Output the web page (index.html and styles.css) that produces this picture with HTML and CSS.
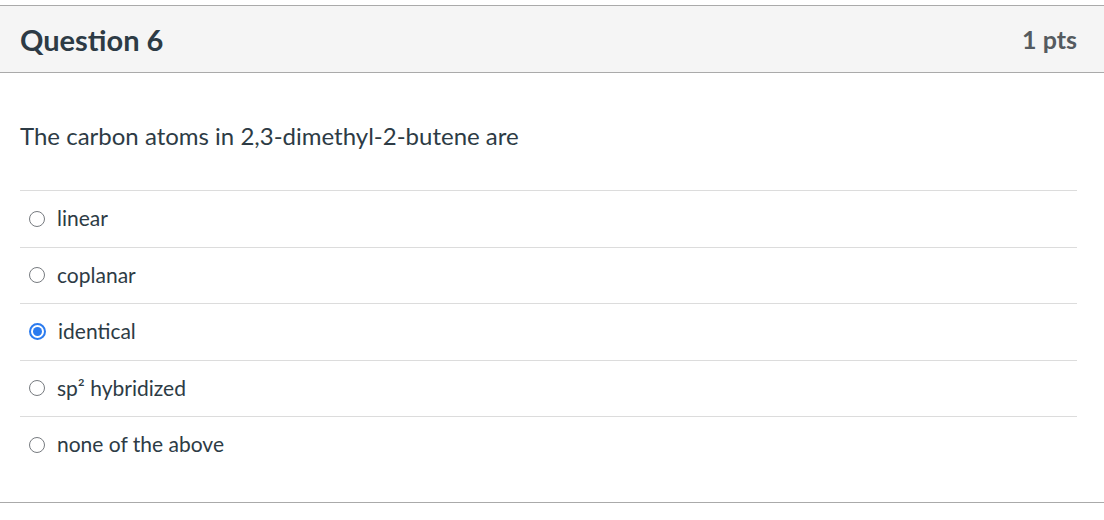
FILE: index.html
```html
<!DOCTYPE html>
<html>
<head>
<meta charset="utf-8">
<link rel="stylesheet" href="styles.css">
</head>
<body>
<div class="question">
  <div class="q-header">
    <h2 class="q-title">Question 6</h2>
    <div class="q-points">1 pts</div>
  </div>
  <div class="q-body">
    <p class="q-text">The carbon atoms in 2,3-dimethyl-2-butene are</p>
    <div class="answers">
      <label class="answer"><span class="radio"></span><span class="a-text">linear</span></label>
      <label class="answer"><span class="radio"></span><span class="a-text">coplanar</span></label>
      <label class="answer"><span class="radio checked"></span><span class="a-text">identical</span></label>
      <label class="answer"><span class="radio"></span><span class="a-text">sp² hybridized</span></label>
      <label class="answer"><span class="radio"></span><span class="a-text">none of the above</span></label>
    </div>
  </div>
</div>
</body>
</html>
```

FILE: styles.css
```css
html, body {
  margin: 0;
  padding: 0;
  background: #ffffff;
}
body {
  font-family: Lato, "Open Sans", sans-serif;
  color: #2d3b45;
}
.question {
  margin-top: 5px;
  border-top: 1px solid #aaaaaa;
  border-bottom: 1px solid #aaaaaa;
}
.q-header {
  height: 66px;
  background: #f5f5f5;
  border-bottom: 1px solid #aaaaaa;
  display: flex;
  align-items: center;
  justify-content: space-between;
  padding: 0 27px 0 20px;
}
.q-title {
  margin: 0;
  font-size: 29px;
  font-weight: 700;
  color: #2d3b45;
}
.q-points {
  font-size: 25px;
  font-weight: 700;
  color: #555b60;
}
.q-body {
  padding: 0 27px 29px 20px;
}
.q-text {
  margin: 0 0 39px 0;
  padding-top: 48px;
  font-size: 24px;
  line-height: 30px;
}
.answers {
  display: flex;
  flex-direction: column;
}
.answer {
  display: flex;
  align-items: center;
  gap: 12px;
  height: 56.5px;
  box-sizing: border-box;
  padding-bottom: 2px;
  border-top: 1px solid #dcdcdc;
  padding-left: 9px;
  font-size: 21px;
}
.radio {
  width: 14px;
  height: 14px;
  border: 1.5px solid #777b80;
  border-radius: 50%;
  box-sizing: content-box;
  display: inline-flex;
  align-items: center;
  justify-content: center;
  flex: none;
  margin-top: 2px;
}
.radio.checked {
  border: 2px solid #2b7bef;
  width: 13px;
  height: 13px;
}
.radio.checked::after {
  content: "";
  width: 9px;
  height: 9px;
  border-radius: 50%;
  background: #2b7bef;
}
```
